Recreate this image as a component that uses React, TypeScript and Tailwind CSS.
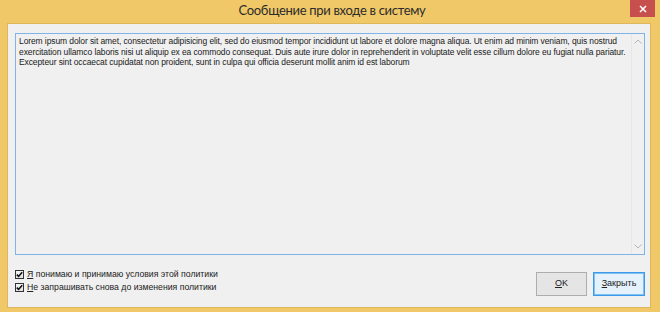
import React from 'react';

const bodyText =
  'Lorem ipsum dolor sit amet, consectetur adipisicing elit, sed do eiusmod tempor incididunt ut labore et dolore magna aliqua. Ut enim ad minim veniam, quis nostrud exercitation ullamco laboris nisi ut aliquip ex ea commodo consequat. Duis aute irure dolor in reprehenderit in voluptate velit esse cillum dolore eu fugiat nulla pariatur. Excepteur sint occaecat cupidatat non proident, sunt in culpa qui officia deserunt mollit anim id est laborum';

const Check: React.FC<{ label: string; hotkey: string }> = ({ label, hotkey }) => (
  <label className="flex items-center h-[13px] gap-[3px]">
    <span className="w-[9px] h-[9px] border border-[#333] bg-gradient-to-b from-[#f4f4f4] to-[#e2e2e2] flex items-center justify-center">
      <svg width="7" height="7" viewBox="0 0 7 7">
        <path d="M0.8 3.6 L2.6 5.4 L6.2 1.2" stroke="#111" strokeWidth="1.6" fill="none" />
      </svg>
    </span>
    <span className="text-[8.7px] text-[#222]">
      <span className="underline">{hotkey}</span>
      {label}
    </span>
  </label>
);

export default function App() {
  return (
    <div
      className="w-[660px] h-[312px] bg-[#f0c868] flex flex-col pl-[7px] pr-[9px] pb-[4px]"
      style={{ fontFamily: '"Liberation Sans", Arial, sans-serif' }}
    >
      {/* Title bar */}
      <div className="h-[23px] relative flex items-center justify-center">
        <span
          className="text-[13px] text-[#2b2b2b] pl-[6px] pb-[1px] tracking-[-0.3px]"
          style={{ fontFamily: 'Lato, "Open Sans", sans-serif' }}
        >
          Сообщение при входе в систему
        </span>
        <div className="absolute right-[-4px] top-0 w-[25px] h-[17px] bg-[#c7504f] flex items-center justify-center">
          <svg width="8" height="8" viewBox="0 0 8 8">
            <path d="M1 1 L7 7 M7 1 L1 7" stroke="#fff" strokeWidth="1.5" />
          </svg>
        </div>
      </div>

      {/* Client area */}
      <div className="flex-1 bg-[#f0f0f0] border border-[#ddb75c] flex flex-col pt-[9px] pl-[7px] pr-[5px]">
        <div className="h-[222px] border border-[#7eb4ea] bg-[#f0f0f0] flex">
          <div className="flex-1 px-[3px] pt-[2px] text-[8.5px] leading-[10.5px] tracking-[-0.1px] text-[#1a1a1a]">
            {bodyText}
          </div>
          <div className="w-[13px] border-l border-[#e6e6e6] flex flex-col justify-between items-center py-[5px]">
            <svg width="8" height="5" viewBox="0 0 8 5">
              <path d="M0.5 4.5 L4 1 L7.5 4.5" stroke="#b8b8b8" strokeWidth="1" fill="none" />
            </svg>
            <svg width="8" height="5" viewBox="0 0 8 5">
              <path d="M0.5 0.5 L4 4 L7.5 0.5" stroke="#b8b8b8" strokeWidth="1" fill="none" />
            </svg>
          </div>
        </div>

        <div className="flex justify-between">
          <div className="flex flex-col pt-[13px]">
            <Check hotkey="Я" label=" понимаю и принимаю условия этой политики" />
            <Check hotkey="Н" label="е запрашивать снова до изменения политики" />
          </div>
          <div className="flex gap-[6px] pt-[17px]">
            <button className="w-[51px] h-[24px] border border-[#adadad] bg-[#e5e5e5] text-[9px] text-[#222]">
              <span className="underline">O</span>K
            </button>
            <button className="w-[52px] h-[24px] border border-[#3c9ae8] bg-[#e5f1fb] text-[9px] text-[#222] shadow-[inset_0_0_0_1px_#7fc0f4]">
              <span className="underline">З</span>акрыть
            </button>
          </div>
        </div>
      </div>
    </div>
  );
}
